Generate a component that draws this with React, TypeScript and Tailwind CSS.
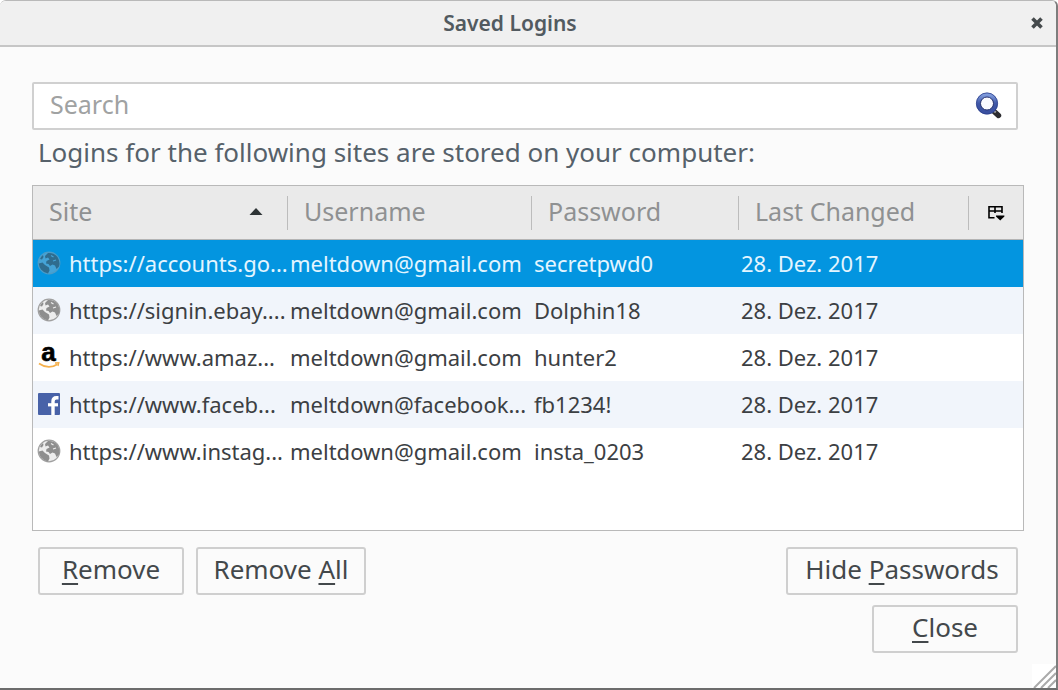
import { ReactNode } from 'react';

type SiteIcon = 'globe' | 'amazon' | 'facebook';

interface Login {
  icon: SiteIcon;
  site: string;
  username: string;
  password: string;
  changed: string;
}

const logins: Login[] = [
  { icon: 'globe', site: 'https://accounts.go...', username: 'meltdown@gmail.com', password: 'secretpwd0', changed: '28. Dez. 2017' },
  { icon: 'globe', site: 'https://signin.ebay....', username: 'meltdown@gmail.com', password: 'Dolphin18', changed: '28. Dez. 2017' },
  { icon: 'amazon', site: 'https://www.amaz...', username: 'meltdown@gmail.com', password: 'hunter2', changed: '28. Dez. 2017' },
  { icon: 'facebook', site: 'https://www.faceb...', username: 'meltdown@facebook...', password: 'fb1234!', changed: '28. Dez. 2017' },
  { icon: 'globe', site: 'https://www.instag...', username: 'meltdown@gmail.com', password: 'insta_0203', changed: '28. Dez. 2017' },
];

function GlobeIcon({ selected }: { selected: boolean }) {
  const land = selected ? '#2f6c8e' : '#8e8e8e';
  const sea = selected ? '#45a3d6' : '#ededed';
  return (
    <svg viewBox="0 0 24 24" className="size-6 shrink-0" aria-hidden="true">
      <circle cx="12" cy="12" r="10.8" fill={sea} stroke={selected ? '#4b9cc8' : '#a0a0a0'} strokeWidth="1.2" />
      <path d="M11 2 Q17 1.5 20.5 6 Q23.5 11 22 15.5 L19.5 18 L18 14.5 L15.5 13.5 L13 15 L11.5 13 L9 12.5 L9.5 10 L12.5 8.5 L11 6.5 L8.5 7.5 L8 5 Z" fill={land} />
      <path d="M1.8 12.5 L5.5 11.5 L8 14 L12 16.5 L12.5 19.5 L11 22.5 Q6.5 21.5 4 18.5 Q2 15.5 1.8 12.5 Z" fill={land} />
      <path d="M3 8 Q4 5.5 6 4 L6.5 6 L5 8.5 Z" fill={land} />
      <path d="M14 4.5 L16.5 6 M16 10 L19 9" fill="none" stroke={sea} strokeWidth="1.2" />
    </svg>
  );
}

function AmazonIcon() {
  return (
    <svg viewBox="0 0 24 24" className="size-6 shrink-0 overflow-visible" aria-hidden="true">
      <text x="11.5" y="16" textAnchor="middle" fontSize="26" fontWeight="700" fill="#000" stroke="#000" strokeWidth="0.6" fontFamily="'Liberation Sans', sans-serif">a</text>
      <path d="M2 18.5 Q11.5 25 20.5 19.2" fill="none" stroke="#f5b04c" strokeWidth="1.8" />
      <path d="M18 18 L21.8 17.8 L21 21" fill="none" stroke="#f5b04c" strokeWidth="1.3" />
    </svg>
  );
}

function FacebookIcon() {
  return (
    <svg viewBox="0 0 24 24" className="size-6 shrink-0" aria-hidden="true">
      <rect x="1" y="1" width="22" height="22" rx="1" fill="#4862a8" />
      <path d="M16 23 V9.5 Q16 5.7 19.5 5.7 H21.5" fill="none" stroke="#fff" strokeWidth="3.4" />
      <path d="M11 12.8 H21" stroke="#fff" strokeWidth="3.2" />
    </svg>
  );
}

function RowIcon({ icon, selected }: { icon: SiteIcon; selected: boolean }) {
  if (icon === 'amazon') return <AmazonIcon />;
  if (icon === 'facebook') return <FacebookIcon />;
  return <GlobeIcon selected={selected} />;
}

function SearchIcon() {
  return (
    <svg viewBox="0 0 28 28" className="size-7" aria-hidden="true">
      <defs>
        <linearGradient id="ring" x1="0" y1="0" x2="0" y2="1">
          <stop offset="0" stopColor="#7f9bdc" />
          <stop offset="0.5" stopColor="#4058a8" />
          <stop offset="1" stopColor="#3a50a0" />
        </linearGradient>
      </defs>
      <path d="M19 18.5 L24.5 23.5" stroke="#2c2c30" strokeWidth="5.4" strokeLinecap="round" />
      <path d="M19.5 18.5 L21.8 20.6" stroke="#9a9a9a" strokeWidth="2" />
      <circle cx="13" cy="11.5" r="8.6" fill="#fafaff" stroke="url(#ring)" strokeWidth="4.4" />
      <circle cx="13" cy="11.5" r="10.6" fill="none" stroke="#2c3f8c" strokeWidth="0.8" />
      <circle cx="13" cy="11.5" r="6.5" fill="none" stroke="#2a3570" strokeWidth="1" />
    </svg>
  );
}

function ColumnPickerIcon() {
  return (
    <svg viewBox="0 0 18 16" className="h-4 w-[18px]" aria-hidden="true">
      <path d="M2 13.4 V1.8 H15 V8 M2 6 H15 M8 2 V8 M1.2 12.8 H7.5" fill="none" stroke="#000" strokeWidth="1.6" />
      <path d="M9 10.4 H17.4 V11.4 L13.2 15.6 L9 11.4 Z" fill="#000" />
    </svg>
  );
}

function HeaderCell({ children, sorted }: { children: ReactNode; sorted?: boolean }) {
  return (
    <th scope="col" className="border-b border-[#b4b4b4] p-0 font-normal" aria-sort={sorted ? 'ascending' : undefined}>
      <div className="flex h-[34px] items-center justify-between border-r border-[#bcbcbc] pr-6 pb-1 pl-4">
        {children}
        {sorted && (
          <svg viewBox="0 0 14 8" className="h-2 w-3.5" aria-hidden="true">
            <path d="M0.5 8 L7 1 L13.5 8 Z" fill="#2e3436" />
          </svg>
        )}
      </div>
    </th>
  );
}

function DialogButton({ children, className = '' }: { children: ReactNode; className?: string }) {
  return (
    <button
      type="button"
      className={`h-12 rounded-[3px] border-2 border-[#cfcfcf] bg-[#fbfbfb] pb-1 text-[26px] leading-8 text-[#43484b] ${className}`}
    >
      {children}
    </button>
  );
}

function AccessKey({ children }: { children: string }) {
  return <span className="underline decoration-2 underline-offset-4">{children}</span>;
}

export default function App() {
  return (
    <div className="relative flex min-h-screen flex-col rounded-t-md border-t border-r-2 border-b-2 border-t-[#b9b9b9] border-r-[#7d7d7d] border-b-[#6c6c6c] bg-[#fbfbfb] font-['Noto_Sans','Open_Sans',sans-serif]">
      <header className="flex h-[46px] shrink-0 items-center rounded-t-md border-b-2 border-[#c6c6c6] bg-[#f0f0f0] pr-3">
        <h1 className="grow text-center text-[21px] leading-7 font-semibold text-[#525a60]">Saved Logins</h1>
        <button type="button" aria-label="Close window" className="flex w-6 justify-end">
          <svg viewBox="0 0 14 14" className="size-3.5" aria-hidden="true">
            <path d="M2.5 2.5 L11.5 11.5 M11.5 2.5 L2.5 11.5" stroke="#454a4c" strokeWidth="3.6" />
          </svg>
        </button>
      </header>

      <main className="flex grow flex-col px-8 pt-[35px] pb-[35px]">
        <div className="mr-1.5 flex h-12 shrink-0 items-center rounded-[2px] border-2 border-[#d0d0d0] bg-white pr-3.5 pl-4">
          <input
            type="text"
            aria-label="Search"
            placeholder="Search"
            className="min-w-0 grow pb-1 text-[25px] leading-8 text-[#43484b] outline-none placeholder:text-[#a0a2a2]"
          />
          <SearchIcon />
        </div>

        <p id="logins-label" className="mt-1 ml-1.5 text-[26px] leading-9 text-[#56616a]">
          Logins for the following sites are stored on your computer:
        </p>

        <div className="mt-[15px] grow border border-[#b9b9b9] bg-white">
          <table aria-labelledby="logins-label" className="w-full table-fixed border-separate border-spacing-0 text-left">
            <colgroup>
              <col className="w-[255px]" />
              <col className="w-[244px]" />
              <col className="w-[207px]" />
              <col />
              <col className="w-[54px]" />
            </colgroup>
            <thead className="bg-[#eaeaea] text-[25px] leading-8 text-[#8f9192]">
              <tr className="h-[54px]">
                <HeaderCell sorted>Site</HeaderCell>
                <HeaderCell>Username</HeaderCell>
                <HeaderCell>Password</HeaderCell>
                <HeaderCell>Last Changed</HeaderCell>
                <th scope="col" className="border-b border-[#b4b4b4] p-0">
                  <button type="button" aria-label="Select columns to display" className="flex w-full justify-center">
                    <ColumnPickerIcon />
                  </button>
                </th>
              </tr>
            </thead>
            <tbody className="text-[22px] leading-8 whitespace-nowrap text-[#3c4043]">
              {logins.map((login, index) => {
                const selected = index === 0;
                return (
                  <tr
                    key={login.site}
                    aria-selected={selected}
                    className={selected ? 'h-[47px] bg-[#0395e0] text-[#e4f5ff]' : 'h-[47px] even:bg-[#f1f5fb]'}
                  >
                    <td className="p-0 pb-0.5 pl-1">
                      <div className="flex items-center gap-2">
                        <RowIcon icon={login.icon} selected={selected} />
                        {login.site}
                      </div>
                    </td>
                    <td className="p-0 pb-0.5 pl-0.5">{login.username}</td>
                    <td className="p-0 pb-0.5 pl-0.5">{login.password}</td>
                    <td className="p-0 pb-0.5 pl-0.5" colSpan={2}>{login.changed}</td>
                  </tr>
                );
              })}
            </tbody>
          </table>
        </div>

        <div className="mx-1.5 mt-4 flex gap-3">
          <DialogButton className="w-[146px]"><AccessKey>R</AccessKey>emove</DialogButton>
          <DialogButton className="w-[170px]">Remove <AccessKey>A</AccessKey>ll</DialogButton>
          <DialogButton className="ml-auto w-[232px]">Hide <AccessKey>P</AccessKey>asswords</DialogButton>
        </div>
        <div className="mx-1.5 mt-2.5 flex justify-end">
          <DialogButton className="w-[146px]"><AccessKey>C</AccessKey>lose</DialogButton>
        </div>
      </main>

      <svg viewBox="0 0 24 24" className="absolute right-0 bottom-0 size-6" aria-hidden="true">
        <rect width="24" height="24" fill="#fff" />
        <path d="M2 24 L24 2 M9 24 L24 9 M16 24 L24 16" stroke="#aaa" strokeWidth="2" />
      </svg>
    </div>
  );
}
